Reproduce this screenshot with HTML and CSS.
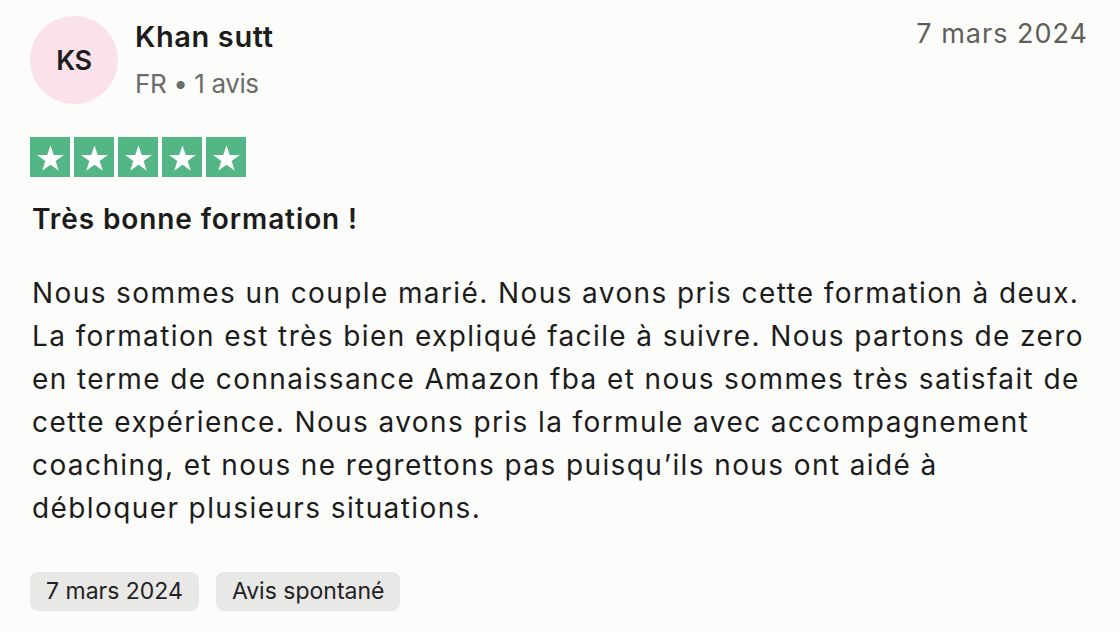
FILE: index.html
```html
<!DOCTYPE html>
<html lang="fr">
<head>
<meta charset="utf-8">
<link rel="stylesheet" href="styles.css">
</head>
<body>
<article class="review">
  <header class="head">
    <div class="user">
      <div class="avatar">KS</div>
      <div class="meta">
        <div class="name">Khan sutt</div>
        <div class="sub">FR • 1 avis</div>
      </div>
    </div>
    <time class="date">7 mars 2024</time>
  </header>
  <div class="stars">
    <span class="star"><svg viewBox="0 0 24 24"><path d="M12 3.2l2.35 7.05h7.4l-6 4.35 2.3 7.05L12 17.3l-6.05 4.35 2.3-7.05-6-4.35h7.4z"/></svg></span>
    <span class="star"><svg viewBox="0 0 24 24"><path d="M12 3.2l2.35 7.05h7.4l-6 4.35 2.3 7.05L12 17.3l-6.05 4.35 2.3-7.05-6-4.35h7.4z"/></svg></span>
    <span class="star"><svg viewBox="0 0 24 24"><path d="M12 3.2l2.35 7.05h7.4l-6 4.35 2.3 7.05L12 17.3l-6.05 4.35 2.3-7.05-6-4.35h7.4z"/></svg></span>
    <span class="star"><svg viewBox="0 0 24 24"><path d="M12 3.2l2.35 7.05h7.4l-6 4.35 2.3 7.05L12 17.3l-6.05 4.35 2.3-7.05-6-4.35h7.4z"/></svg></span>
    <span class="star"><svg viewBox="0 0 24 24"><path d="M12 3.2l2.35 7.05h7.4l-6 4.35 2.3 7.05L12 17.3l-6.05 4.35 2.3-7.05-6-4.35h7.4z"/></svg></span>
  </div>
  <h2 class="title">Très bonne formation !</h2>
  <p class="text">Nous sommes un couple marié. Nous avons pris cette formation à deux. La formation est très bien expliqué facile à suivre. Nous partons de zero en terme de connaissance Amazon fba et nous sommes très satisfait de cette expérience. Nous avons pris la formule avec accompagnement coaching, et nous ne regrettons pas puisqu’ils nous ont aidé à débloquer plusieurs situations.</p>
  <div class="tags">
    <span class="tag">7 mars 2024</span>
    <span class="tag">Avis spontané</span>
  </div>
</article>
</body>
</html>
```
FILE: styles.css
```css
* { box-sizing: border-box; }
html, body { margin: 0; padding: 0; background: #fcfcfb; }
body { font-family: Inter, "Noto Sans", sans-serif; color: #1c1c1c; }
.review { width: 1120px; padding: 16px 30px 0 30px; }
.head { display: flex; justify-content: space-between; align-items: flex-start; }
.user { display: flex; align-items: flex-start; gap: 17px; }
.avatar { width: 88px; height: 88px; border-radius: 50%; background: #fbe1ea; display: flex; align-items: center; justify-content: center; font-size: 27px; font-weight: 600; color: #1c1c1c; letter-spacing: -0.3px; }
.meta { display: flex; flex-direction: column; padding-top: 3px; }
.name { font-size: 29px; font-weight: 600; line-height: 36px; letter-spacing: 0.6px; }
.sub { font-size: 26px; line-height: 32px; margin-top: 13px; color: #6b6b69; letter-spacing: -0.4px; }
.date { font-size: 27px; line-height: 36px; color: #5f5f5b; margin-right: 2px; letter-spacing: 1px; }
.stars { display: flex; gap: 4px; margin-top: 33px; }
.star { width: 40px; height: 40px; background: #52b784; display: flex; align-items: center; justify-content: center; }
.star svg { width: 33px; height: 33px; fill: #fff; }
.title { font-size: 28px; font-weight: 600; margin: 24px 0 0 2px; line-height: 36px; letter-spacing: 0.9px; }
.text { font-size: 28px; line-height: 43px; margin: 35px 0 0 2px; width: 1060px; letter-spacing: 1.4px; }
.tags { display: flex; gap: 17px; margin-top: 42px; }
.tag { background: #e8e8e7; border-radius: 8px; font-size: 23px; line-height: 39px; padding: 0 16px; color: #222; letter-spacing: 0; }
```
